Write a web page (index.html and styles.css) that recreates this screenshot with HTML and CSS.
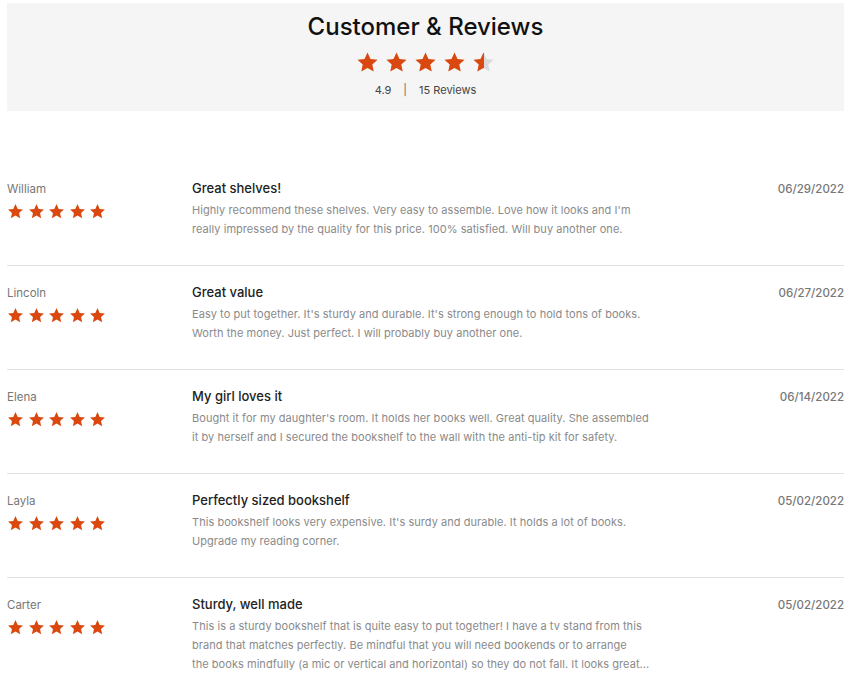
FILE: index.html
```html
<!DOCTYPE html>
<html>
<head>
<meta charset="utf-8">
<link rel="stylesheet" href="styles.css">
</head>
<body>
<svg width="0" height="0" class="defs">
  <defs>
    <symbol id="star" viewBox="0 0 24 24"><polygon points="12,1.5 15.1,8.3 22.5,9.1 17,14.1 18.5,21.5 12,17.8 5.5,21.5 7,14.1 1.5,9.1 8.9,8.3"/></symbol>
    <linearGradient id="half" x1="0" x2="1" y1="0" y2="0">
      <stop offset="52%" stop-color="#d9480f"/>
      <stop offset="52%" stop-color="#dadada"/>
    </linearGradient>
  </defs>
</svg>
<div class="page">
  <header class="summary">
    <h1 class="summary-title">Customer &amp; Reviews</h1>
    <div class="stars stars-lg">
      <svg><use href="#star"/></svg><svg><use href="#star"/></svg><svg><use href="#star"/></svg><svg><use href="#star"/></svg><svg class="half"><use href="#star"/></svg>
    </div>
    <div class="summary-meta"><span>4.9</span><span class="sep">|</span><span>15 Reviews</span></div>
  </header>

  <section class="reviews">
    <article class="review">
      <div class="author">
        <div class="name">William</div>
        <div class="stars"><svg><use href="#star"/></svg><svg><use href="#star"/></svg><svg><use href="#star"/></svg><svg><use href="#star"/></svg><svg><use href="#star"/></svg></div>
      </div>
      <div class="content">
        <h3 class="title">Great shelves!</h3>
        <p class="text">Highly recommend these shelves. Very easy to assemble. Love how it looks and I'm<br>really impressed by the quality for this price. 100% satisfied. Will buy another one.</p>
      </div>
      <div class="date">06/29/2022</div>
    </article>
    <article class="review">
      <div class="author">
        <div class="name">Lincoln</div>
        <div class="stars"><svg><use href="#star"/></svg><svg><use href="#star"/></svg><svg><use href="#star"/></svg><svg><use href="#star"/></svg><svg><use href="#star"/></svg></div>
      </div>
      <div class="content">
        <h3 class="title">Great value</h3>
        <p class="text">Easy to put together. It's sturdy and durable. It's strong enough to hold tons of books.<br>Worth the money. Just perfect. I will probably buy another one.</p>
      </div>
      <div class="date">06/27/2022</div>
    </article>
    <article class="review">
      <div class="author">
        <div class="name">Elena</div>
        <div class="stars"><svg><use href="#star"/></svg><svg><use href="#star"/></svg><svg><use href="#star"/></svg><svg><use href="#star"/></svg><svg><use href="#star"/></svg></div>
      </div>
      <div class="content">
        <h3 class="title">My girl loves it</h3>
        <p class="text">Bought it for my daughter's room. It holds her books well. Great quality. She assembled<br>it by herself and I secured the bookshelf to the wall with the anti-tip kit for safety.</p>
      </div>
      <div class="date">06/14/2022</div>
    </article>
    <article class="review">
      <div class="author">
        <div class="name">Layla</div>
        <div class="stars"><svg><use href="#star"/></svg><svg><use href="#star"/></svg><svg><use href="#star"/></svg><svg><use href="#star"/></svg><svg><use href="#star"/></svg></div>
      </div>
      <div class="content">
        <h3 class="title">Perfectly sized bookshelf</h3>
        <p class="text">This bookshelf looks very expensive. It's surdy and durable. It holds a lot of books.<br>Upgrade my reading corner.</p>
      </div>
      <div class="date">05/02/2022</div>
    </article>
    <article class="review">
      <div class="author">
        <div class="name">Carter</div>
        <div class="stars"><svg><use href="#star"/></svg><svg><use href="#star"/></svg><svg><use href="#star"/></svg><svg><use href="#star"/></svg><svg><use href="#star"/></svg></div>
      </div>
      <div class="content">
        <h3 class="title">Sturdy, well made</h3>
        <p class="text">This is a sturdy bookshelf that is quite easy to put together! I have a tv stand from this<br>brand that matches perfectly. Be mindful that you will need bookends or to arrange<br>the books mindfully (a mic or vertical and horizontal) so they do not fall. It looks great...</p>
      </div>
      <div class="date">05/02/2022</div>
    </article>
  </section>
</div>
</body>
</html>
```

FILE: styles.css
```css
* { box-sizing: border-box; }
html, body { margin: 0; padding: 0; background: #fff; }
body { font-family: Inter, "Open Sans", "DejaVu Sans", sans-serif; color: #333; }
.defs { position: absolute; width: 0; height: 0; overflow: hidden; }

.page { padding: 3px 6px 0 7px; }

.summary {
  background: #f5f5f5;
  height: 108px;
  display: flex;
  flex-direction: column;
  align-items: center;
  padding-top: 10px;
}
.summary-title {
  margin: 0;
  font-size: 24px;
  line-height: 28px;
  font-weight: 500;
  color: #111;
}
.stars { display: flex; gap: 3.5px; fill: #d9480f; }
.stars svg { width: 17px; height: 17px; display: block; }
.stars-lg { margin-top: 10px; gap: 6px; }
.stars-lg svg { width: 23px; height: 23px; }
.stars .half { fill: url(#half); }
.summary-meta {
  margin-top: 8px;
  font-size: 11px;
  line-height: 16px;
  color: #444;
  display: flex;
  gap: 12px;
}
.summary-meta .sep { color: #666; }

.reviews { margin-top: 50px; }
.review {
  display: grid;
  grid-template-columns: 185px 1fr auto;
  padding: 16px 0 26px;
  border-top: 1px solid #e3e3e3;
}
.review:first-child { border-top-color: transparent; }
.name {
  font-size: 11.5px;
  line-height: 20px;
  color: #777;
  padding-top: 1px;
}
.author .stars { margin-top: 4px; }
.title {
  margin: 0 0 3px;
  font-size: 13px;
  line-height: 20px;
  font-weight: 500;
  color: #222;
}
.text {
  margin: 0;
  font-size: 11px;
  line-height: 19px;
  color: #8a8a8a;
  letter-spacing: 0.05px;
}
.date {
  font-size: 11.5px;
  line-height: 20px;
  color: #777;
  font-weight: 500;
  padding-top: 1px;
}
```
